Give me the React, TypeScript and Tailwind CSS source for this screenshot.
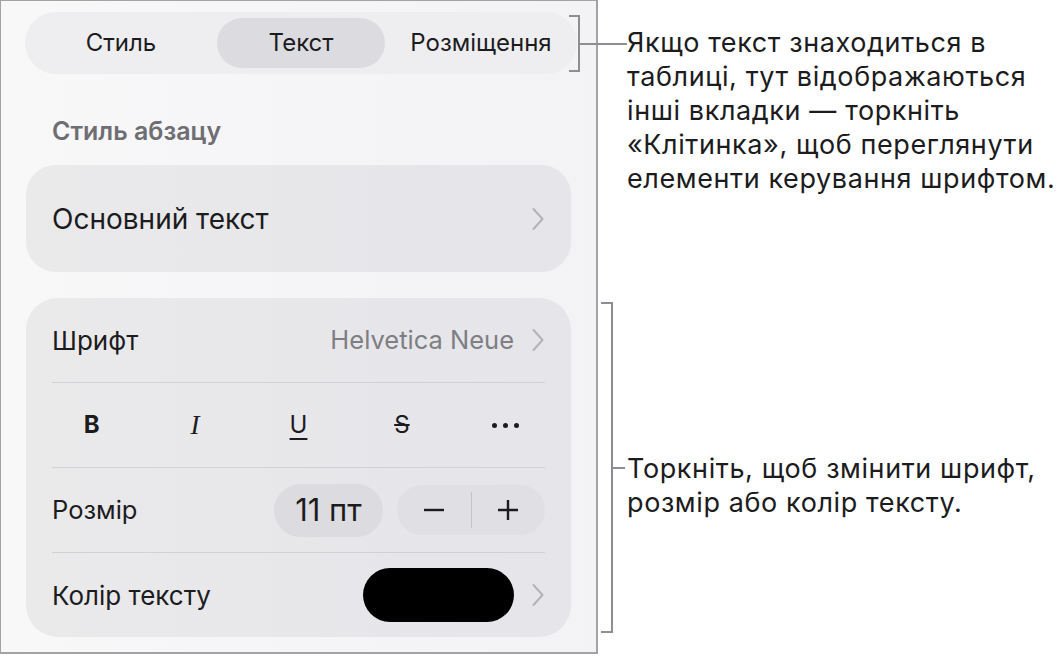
import React from "react";

const FONT = { fontFamily: "Inter, 'Noto Sans', sans-serif" };

function Chevron() {
  return (
    <svg width="14" height="24" viewBox="0 0 14 24" fill="none" className="shrink-0">
      <path d="M2.5 2 L11.5 12 L2.5 22" stroke="#b3b3b7" strokeWidth="2" strokeLinecap="round" strokeLinejoin="round" />
    </svg>
  );
}

function Divider() {
  return <div className="mx-[26px] h-px bg-[#d2d2d6]" />;
}

function Segmented() {
  const tabs = ["Стиль", "Текст", "Розміщення"];
  return (
    <div className="ml-6 mt-[11px] h-[62px] w-[552px] rounded-full bg-[#eeeef0] px-1.5 grid grid-cols-3 items-center">
      {tabs.map((t, i) => (
        <div key={t} className="flex justify-center">
          <div
            className={
              "h-[50px] w-[168px] rounded-full flex items-center justify-center text-[24px] text-[#1c1c1e] " +
              (i === 1 ? "bg-[#dcdce0]" : "")
            }
          >
            {t}
          </div>
        </div>
      ))}
    </div>
  );
}

function FormatRow() {
  return (
    <div className="h-[84px] px-[14px] grid grid-cols-5 items-center text-[#1c1c1e]">
      <div className="flex justify-center">
        <span className="text-[24px] font-bold leading-none">B</span>
      </div>
      <div className="flex justify-center">
        <span className="text-[27px] italic leading-none" style={{ fontFamily: "'Liberation Serif', serif" }}>
          I
        </span>
      </div>
      <div className="flex justify-center">
        <span className="text-[24px] leading-none underline underline-offset-[5px] decoration-[2px]">U</span>
      </div>
      <div className="flex justify-center">
        <span className="text-[24px] leading-none line-through decoration-[1.5px]">S</span>
      </div>
      <div className="flex justify-center items-center gap-[6px]">
        <span className="h-[5px] w-[5px] rounded-full bg-[#1c1c1e]" />
        <span className="h-[5px] w-[5px] rounded-full bg-[#1c1c1e]" />
        <span className="h-[5px] w-[5px] rounded-full bg-[#1c1c1e]" />
      </div>
    </div>
  );
}

function Panel() {
  return (
    <div className="relative w-[598px] h-[654px] shrink-0 border-l border-t border-r-2 border-b-2 border-[#a3a3a6] bg-gradient-to-r from-[#f8f8f9] to-[#f3f3f6] flex flex-col">
      <Segmented />

      <div className="ml-[51px] mt-[45px] h-6 leading-6 text-[25px] font-semibold text-[#6e6e73]">Стиль абзацу</div>

      <div className="mx-[25px] mt-[22px] h-[107px] rounded-[30px] bg-gradient-to-r from-[#eaeaeb] to-[#e5e5ea] flex items-center justify-between pl-[26px] pr-[26px]">
        <span className="text-[28px] text-[#1c1c1e]">Основний текст</span>
        <Chevron />
      </div>

      <div className="mx-[25px] mt-[26px] h-[339px] rounded-[32px] bg-gradient-to-r from-[#eaeaeb] to-[#e5e5ea] flex flex-col">
        <div className="h-[84px] flex items-center justify-between pl-[26px] pr-[26px]">
          <span className="text-[26px] text-[#1c1c1e]">Шрифт</span>
          <div className="flex items-center gap-[17px]">
            <span className="text-[25.5px] text-[#7e7e83]">Helvetica Neue</span>
            <Chevron />
          </div>
        </div>
        <Divider />
        <FormatRow />
        <Divider />
        <div className="h-[84px] flex items-center justify-between pl-[26px] pr-[26px]">
          <span className="text-[25.5px] text-[#1c1c1e]">Розмір</span>
          <div className="flex items-center gap-[14px]">
            <div className="h-[53px] w-[109px] rounded-full bg-[#dcdce0] flex items-center justify-center text-[31px] text-[#1c1c1e]">
              11 пт
            </div>
            <div className="h-[50px] w-[148px] rounded-full bg-[#e0e0e4] flex items-center">
              <div className="flex-1 flex justify-center">
                <svg width="22" height="22" viewBox="0 0 22 22">
                  <path d="M1 11 H21" stroke="#1c1c1e" strokeWidth="2.4" />
                </svg>
              </div>
              <div className="w-px h-[36px] bg-[#c4c4c8]" />
              <div className="flex-1 flex justify-center">
                <svg width="22" height="22" viewBox="0 0 22 22">
                  <path d="M1 11 H21 M11 1 V21" stroke="#1c1c1e" strokeWidth="2.4" />
                </svg>
              </div>
            </div>
          </div>
        </div>
        <Divider />
        <div className="h-[84px] flex items-center justify-between pl-[26px] pr-[26px]">
          <span className="text-[26px] text-[#1c1c1e]">Колір тексту</span>
          <div className="flex items-center gap-[17px]">
            <div className="h-[54px] w-[151px] rounded-full bg-black" />
            <Chevron />
          </div>
        </div>
      </div>

      {/* callout bracket for the tab bar */}
      <div className="absolute left-[568px] top-[14px] h-[57px] w-[11px] border-t-2 border-r-2 border-b-2 border-[#8e8e92]" />
      <div className="absolute left-[578px] top-[42px] h-[2px] w-[48px] bg-[#8e8e92]" />
    </div>
  );
}

export default function App() {
  return (
    <div className="w-[1064px] h-[657px] bg-white flex" style={FONT}>
      <Panel />
      <div className="relative flex-1 flex flex-col pl-[29px] text-[27px] leading-[34px] tracking-[0.6px] text-[#1c1c1e]">
        <p className="mt-[26px] whitespace-nowrap">
          Якщо текст знаходиться в<br />
          таблиці, тут відображаються<br />
          інші вкладки — торкніть<br />
          «Клітинка», щоб переглянути<br />
          елементи керування шрифтом.
        </p>
        <p className="mt-[256px] whitespace-nowrap">
          Торкніть, щоб змінити шрифт,<br />
          розмір або колір тексту.
        </p>

        {/* callout bracket for the formatting card */}
        <div className="absolute left-[3px] top-[302px] h-[331px] w-[12px] border-t-2 border-r-2 border-b-2 border-[#8e8e92]" />
        <div className="absolute left-[14px] top-[467px] h-[2px] w-[13px] bg-[#8e8e92]" />
      </div>
    </div>
  );
}
